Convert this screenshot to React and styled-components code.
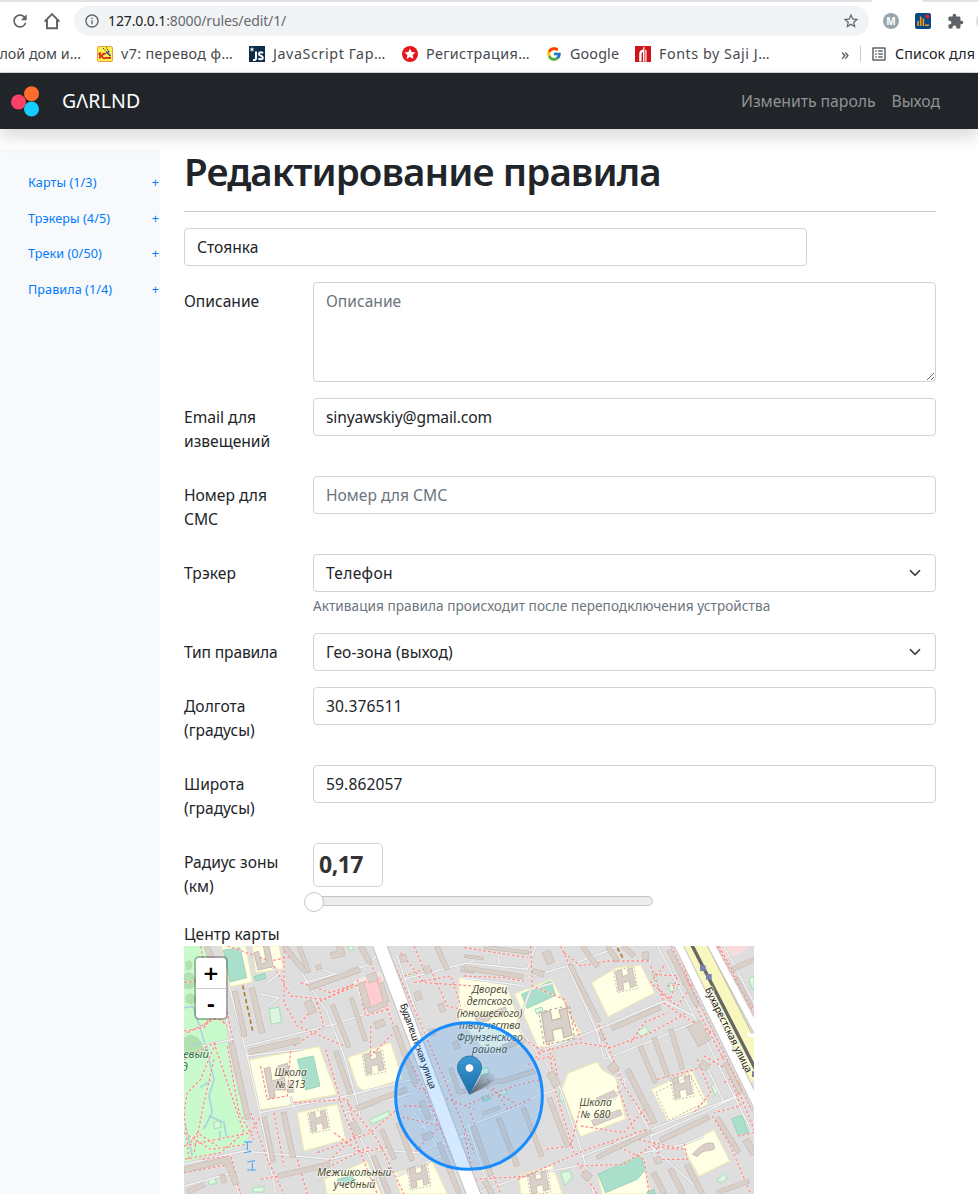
import React from "react";
import styled, { createGlobalStyle } from "styled-components";
import { MdRefresh, MdInfoOutline, MdStarBorder, MdExtension, MdOutlineListAlt } from "react-icons/md";
import { FcGoogle } from "react-icons/fc";

const Global = createGlobalStyle`
  *, *::before, *::after { box-sizing: border-box; }
  html, body { margin: 0; padding: 0; background: #fff; }
  body { overflow: hidden; }
  #root { font-family: "Noto Sans", "Open Sans", sans-serif; font-size: 16px; line-height: 1.5; color: #212529; }
`;

const Page = styled.div`
  width: 978px;
  height: 1194px;
  overflow: hidden;
  display: flex;
  flex-direction: column;
`;

/* ---------- browser chrome ---------- */
const TabStrip = styled.div`
  height: 2px;
  flex: none;
  display: flex;
  justify-content: space-between;
  span { background: #dee1e6; height: 2px; }
  span:first-child { width: 872px; border-bottom-right-radius: 2px; }
  span:last-child { width: 56px; border-bottom-left-radius: 2px; }
`;
const Toolbar = styled.div`
  height: 38px;
  flex: none;
  display: flex;
  align-items: center;
  padding-left: 10px;
  color: #5f6368;
  svg { flex: none; display: block; }
`;
const HomeIcon = styled.svg`
  margin: 0 13px 0 13px;
`;
const AddressBar = styled.div`
  width: 795px;
  height: 30px;
  border-radius: 15px;
  background: #f1f3f4;
  display: flex;
  align-items: center;
  padding: 0 9px 0 10px;
  flex: none;
`;
const Url = styled.div`
  flex: 1;
  margin-left: 8px;
  margin-top: -2px;
  font-size: 14px;
  letter-spacing: -0.13px;
  color: #666a6e;
  b { font-weight: 400; color: #202124; }
`;
const ProfileDot = styled.div`
  width: 16px;
  height: 16px;
  border-radius: 50%;
  background: #9aa6ae;
  color: #fff;
  font-size: 10px;
  font-weight: 700;
  line-height: 16px;
  text-align: center;
  margin: 0 16px 0 14px;
  flex: none;
`;
const Extensions = styled.div`
  display: flex;
  gap: 16px;
  align-items: center;
`;
const Avatar = styled.div`
  width: 24px;
  height: 24px;
  border-radius: 50%;
  background: #dee1e6;
  margin-left: 12px;
  flex: none;
`;
const Bookmarks = styled.div`
  height: 33px;
  flex: none;
  display: flex;
  align-items: center;
  padding-bottom: 5px;
  border-bottom: 1px solid #d5d7da;
  color: #45494d;
`;
const Bookmark = styled.div`
  width: ${(p) => p.$w}px;
  margin-right: 16px;
  display: flex;
  gap: 8px;
  flex: none;
  align-items: center;
  justify-content: ${(p) => (p.$end ? "flex-end" : "flex-start")};
  font-size: 14.3px;
  line-height: 20px;
  letter-spacing: ${(p) => p.$ls || 0}px;
  white-space: nowrap;
  svg { flex: none; display: block; }
`;
const More = styled.div`
  margin-left: auto;
  width: 19px;
  font-size: 16px;
  line-height: 20px;
`;
const ReadingList = styled.div`
  width: 118px;
  height: 16px;
  border-left: 1px solid #c8cbcf;
  padding-left: 9px;
  display: flex;
  align-items: center;
  gap: 7px;
  font-size: 14.3px;
  letter-spacing: 0.1px;
  white-space: nowrap;
  color: #202124;
  svg { flex: none; color: #5f6368; }
`;

/* ---------- site header ---------- */
const Navbar = styled.header`
  height: 56px;
  flex: none;
  background: #212529;
  box-shadow: 0 8px 16px rgba(0, 0, 0, 0.15);
  display: flex;
  align-items: center;
  padding: 0 38px 0 10px;
  position: relative;
`;
const Brand = styled.div`
  margin-left: 22px;
  font-size: 19.5px;
  color: #fff;
  letter-spacing: 0.15px;
`;
const NavLinks = styled.nav`
  margin-left: auto;
  display: flex;
  gap: 16px;
  color: #909294;
  font-size: 15.8px;
  line-height: 26px;
  letter-spacing: -0.06px;
`;

/* ---------- body ---------- */
const Main = styled.div`
  display: flex;
  flex: 1;
  padding-top: 20px;
  min-height: 0;
`;
const Sidebar = styled.aside`
  width: 160px;
  flex: none;
  background: #f8f9fa;
  padding: 16px 1px 0 28px;
`;
const SideItem = styled.div`
  display: flex;
  justify-content: space-between;
  height: 35.6px;
  line-height: 35.6px;
  font-size: 12.6px;
  color: #007bff;
  letter-spacing: 0.08px;
`;
const Content = styled.main`
  width: 752px;
  margin-left: 24px;
  flex: none;
`;
const Title = styled.h1`
  margin: 0;
  height: 62px;
  font-size: 38.5px;
  line-height: 45px;
  font-weight: 600;
  white-space: nowrap;
  letter-spacing: -0.9px;
`;
const Rule = styled.div`
  height: 1px;
  background: #c8c9ca;
  margin-bottom: 16px;
`;
const Row = styled.div`
  display: grid;
  grid-template-columns: ${(p) => (p.$bare ? "623px" : "129px 623px")};
  margin-bottom: 16px;
  align-items: start;
`;
const Label = styled.label`
  padding: 7px 20px 7px 0;
  font-size: 15.6px;
  line-height: 24px;
  white-space: pre-line;
  letter-spacing: ${(p) => p.$ls || 0}px;
`;
const controlBox = `
  display: block;
  width: 100%;
  border: 1px solid #ced4da;
  border-radius: 4px;
  background: #fff;
  color: #212529;
  font-family: inherit;
  font-size: 15.6px;
  line-height: 24px;
  padding: 6px 12px;
  outline: none;
  margin: 0;
  &::placeholder { color: #6c757d; opacity: 1; }
`;
const Input = styled.input`
  ${controlBox}
  height: 38px;
  letter-spacing: ${(p) => p.$ls || 0}px;
`;
const Area = styled.textarea`
  ${controlBox}
  height: 100px;
`;
const Select = styled.div`
  ${controlBox}
  height: 38px;
  display: flex;
  align-items: center;
  justify-content: space-between;
  letter-spacing: ${(p) => p.$ls || 0}px;
`;
const ChevronIcon = styled.svg`
  margin-right: 2px;
`;
const Hint = styled.div`
  margin-top: 3px;
  height: 22px;
  line-height: 21px;
  font-size: 13.6px;
  color: #6c757d;
  letter-spacing: 0.05px;
`;
const RadiusRow = styled(Row)`
  margin-bottom: 0;
  height: 79px;
`;
const RadiusBox = styled.div`
  width: 70px;
  height: 44px;
  border: 1px solid #ced4da;
  border-radius: 5px;
  padding-left: 5px;
  font-size: 23px;
  font-weight: 700;
  line-height: 41px;
  color: #333;
  letter-spacing: -0.5px;
`;
const Track = styled.div`
  width: 340px;
  height: 10px;
  margin-top: 9px;
  border: 1px solid #c5c5c5;
  border-radius: 5px;
  background: #ededed;
  position: relative;
`;
const Thumb = styled.span`
  position: absolute;
  left: -10px;
  top: -5px;
  width: 20px;
  height: 20px;
  border-radius: 50%;
  border: 1px solid #c5c5c5;
  background: #fff;
`;
const MapCaption = styled.div`
  height: 24px;
  line-height: 24px;
  font-size: 15.6px;
`;
const MapFrame = styled.div`
  width: 570px;
  height: 248px;
  position: relative;
  overflow: hidden;
  svg { display: block; }
`;
const ZoomControl = styled.div`
  position: absolute;
  left: 10px;
  top: 10px;
  width: 34px;
  border: 2px solid rgba(0, 0, 0, 0.25);
  border-radius: 5px;
  background-clip: padding-box;
  background-color: #fff;
`;
const ZoomButton = styled.div`
  height: 30px;
  text-align: center;
  font: bold 20px/30px "DejaVu Sans", sans-serif;
  color: #000;
  & + & { border-top: 1px solid #ccc; }
`;

/* ---------- map data: units are thirds of a pixel ---------- */
const buildings = [
  [300,0,365,80,16],[375,125,528,70,18],[152,135,182,272,17],[203,125,235,262,18],[195,318,350,282,19],
  [142,290,192,520,18],[445,175,495,305,14],[502,155,545,285,14],[455,315,500,445,16],[632,240,695,415,17],
  [517,487,668,430,17],[240,512,268,648,15],[298,498,328,635,17],[283,690,438,655,17],[0,672,130,640,18],
  [128,640,157,715,20],[592,550,632,640,15],[642,530,685,645,15],[370,165,388,202,24],[505,528,525,565,22],
  [765,590,826,744,16],[568,630,615,744,16],[530,0,558,50,18],[758,0,790,72,16],[68,0,90,60,18],
  [10,738,62,715,16],[115,685,120,712,16],[345,0,375,80,14],[320,410,320,440,18],[395,65,412,62,15],
  [830,68,870,74,18],[530,110,552,185,20],[552,195,610,170,18],[590,110,608,170,18],[550,100,580,90,26],
  [440,30,480,20,20],[465,0,475,25,20],[572,240,602,228,22],[712,465,735,520,18],[715,575,745,565,22],
  [800,365,825,440,14],[822,440,870,428,13],[648,40,668,34,22],[720,75,740,68,24],[692,152,712,146,28],[765,188,782,182,26],
  [735,262,755,256,22],[808,300,826,294,24],
];
const buildingsB = [
  [0,66,178,92,15],[60,3,195,20,12],[0,30,60,38,10],[245,15,262,52,26],[205,75,240,86,18],[318,55,405,228,15],
  [355,0,400,62,15],[430,0,460,45,15],[478,0,510,30,15],[615,12,700,180,15],[443,248,590,183,16],
  [528,300,575,410,15],[570,275,612,392,15],[620,250,656,370,15],[490,370,572,532,18],[255,455,312,602,16],
  [178,485,234,632,15],[103,515,160,660,16],[28,540,82,690,16],[108,408,212,375,15],[20,435,110,402,15],
  [398,635,562,555,14],[588,584,735,513,17],[760,515,825,620,15],[688,232,722,292,44],[783,350,830,440,16],
  [568,680,602,744,17],[618,668,658,744,17],[668,655,715,744,17],[258,378,280,420,25],[438,355,458,375,28],
  [62,705,85,744,18],[358,680,378,698,25],[570,645,592,640,22],[805,70,870,40,16],[815,98,860,185,17],
  [845,580,872,625,22],[760,740,855,705,15],[385,532,472,498,20],[400,465,455,440,20],[708,352,732,366,25],
  [60,215,128,190,18],[35,222,75,208,30],[115,305,185,280,17],[55,503,108,485,12],[408,258,418,285,12],
  [535,30,555,28,24],
];
const campuses = [
  "188,343 405,302 458,445 335,468 310,480 222,492",
  "492,335 620,290 655,400 540,435 520,420",
  "340,500 460,475 485,580 360,615",
  "112,0 185,0 205,108 138,122",
  "205,0 285,0 298,68 215,80",
  "630,682 745,648 790,744 650,744",
  "420,700 548,645 592,744 430,744",
  "825,95 965,112 1000,215 1020,300 900,310 825,220",
];
const campusesB = [
  "152,144 262,100 350,262 265,302 222,302",
  "383,110 458,65 530,58 572,140 432,212",
  "294,430 312,382 398,348 415,372 455,395 485,518 350,572",
  "562,430 685,375 732,475 615,532",
  "655,600 750,552 797,645 705,690",
  "165,688 265,658 295,744 170,744",
  "400,688 530,625 562,744 415,744",
];
const pitches = [
  "118,12 168,5 188,95 138,108","340,340 388,330 408,420 365,432","460,700 505,688 512,706 465,716","210,92 243,82 246,98 216,104",
];
const pitchesB = [
  "172,145 260,105 275,148 190,187","402,685 528,628 545,670 520,700 425,740","803,518 835,508 852,560 825,572",
  "50,455 76,446 80,460 56,466","548,738 570,730 574,744 552,744",
];
const lawns = [
  "256,188 285,184 293,228 262,235","556,522 612,495 618,510 565,534","675,86 688,84 690,96 678,98",
  "72,700 92,695 98,712 76,716","205,725 240,722 240,738 208,738","490,0 505,0 510,12 498,14","88,530 106,524 112,544 92,548",
];
const lawnsB = [
  "285,440 295,438 302,462 290,468","742,420 752,408 764,435 752,448","290,680 318,674 324,695 302,718",
  "520,256 545,240 555,258 530,274","213,190 233,183 238,196 218,204","40,372 70,364 76,382 50,388",
  "100,438 125,430 130,443 105,450","758,705 780,682 790,698 772,710","612,115 640,110 638,130 618,138","565,80 575,78 580,100 570,105","854,98 870,90 870,130 864,128",
];
const lanes = [
  "135,120 190,330 240,560 275,744","0,655 180,615 440,640 560,610 700,620 860,560","185,300 450,235 600,185",
  "225,500 485,450 690,400","310,0 370,110 430,200 480,330 520,470 530,520","360,110 545,60 590,20",
  "495,505 560,640 600,744","640,30 700,210 730,270","660,100 870,45","415,70 465,90 530,60","185,330 355,310",
  "0,720 145,680 165,744","640,690 745,640 870,590","725,430 870,375","480,500 690,440","250,110 290,80 205,20",
  "120,200 145,280 60,300","230,145 285,155 250,180","690,500 760,600 870,560","700,490 755,500 750,530 710,545","320,450 330,490",
];
const lanesB = [
  "0,50 190,70 215,0","180,120 0,95","100,0 105,55","190,95 310,60 470,0","310,60 400,260 450,360 560,560 575,640",
  "220,320 400,250 600,165 690,210","400,260 420,340 560,285 690,230 750,270","240,440 140,490 0,545",
  "235,330 290,430 345,590 390,744","345,635 560,550 820,450","580,0 690,210 830,490 870,570","560,570 720,500 820,450",
  "235,400 215,370 70,420","340,660 180,690 30,744","540,620 660,595 720,570","560,600 720,744","10,530 80,744",
  "280,430 235,445","720,345 780,470","780,0 870,170","455,395 485,400 450,460","270,110 200,130 160,240 220,320",
];
const walks = [
  "270,60 320,150 420,160 560,100","300,0 300,170 340,240 480,300","10,260 130,200 150,300","0,340 90,290 180,560 110,620 0,640",
  "130,300 165,500 210,580","60,240 100,180 70,120","0,110 70,100 120,230","350,110 440,140 510,115 400,170 350,230",
  "330,300 420,240 400,170","425,310 480,500 580,744","200,500 250,640 300,744","330,470 490,460 520,560 420,660",
  "400,620 560,560 650,480","0,680 140,655 170,744","270,500 300,660","340,640 370,744","230,700 440,660 560,600",
  "560,50 640,270 720,430 850,744","620,30 700,210 790,420 870,620","560,240 560,330 640,250","650,20 720,110 870,120",
  "740,70 790,180 870,200","690,110 800,90 830,180","130,0 260,45 330,30","520,100 545,210 610,190","690,420 870,490",
  "660,480 750,480 780,560","490,470 580,580 660,744","230,360 250,460 310,450 320,310","0,600 200,560 230,510","640,510 770,540 690,620",
  "0,560 80,610 190,595","15,640 0,500","55,640 140,630 160,700","450,560 530,620 620,600","690,0 720,70 660,90",
  "0,255 60,245 90,205 130,240","95,290 50,400 10,440 0,500","90,340 60,470 30,620","20,590 40,560 100,600","50,0 60,60 110,180",
];
const walksB = [
  "0,5 190,35","0,90 120,95 180,105","200,0 205,120 300,160 355,290","290,0 350,130 420,270 480,420 560,540",
  "300,20 350,60 430,45 560,45","220,320 350,290 440,305 560,260 670,200","560,60 600,170 640,200 760,270",
  "350,480 320,600 240,610","350,540 480,560 550,480","640,0 700,190 810,400 870,550","350,660 480,655 560,600 640,610",
  "600,60 560,110 620,160 640,90 570,85","610,120 690,110 640,180 590,140","500,290 540,230 610,200",
  "700,340 740,440 690,500","720,330 790,370 830,480 750,500","580,400 730,360 780,330","150,470 60,420 0,440","0,480 150,420 230,400",
  "70,400 130,490 200,460","0,560 30,700 200,690","220,340 270,330 280,390","160,700 370,610 550,550","340,650 400,744","570,590 590,640 670,640 660,590",
  "700,0 870,330","765,0 870,190","180,280 235,315 190,360","555,740 540,640 440,590","745,510 800,600 860,744","820,570 870,560","20,500 60,620 110,744",
  "255,290 270,420 330,620","780,410 830,380 820,450","460,420 520,580 660,610",
];
const H = "M-34,-28 L-14,-34 L-10,-12 L10,-18 L5,-36 L22,-40 L34,20 L16,26 L12,4 L-10,10 L-6,32 L-24,36 Z";

const Layer = ({ polys, lawn, pitch, lane, walk, blds, hs }) => (
  <g>
    {polys.map((p) => <polygon key={p} points={p} fill="#ffffe5" stroke="#f3eab0" strokeWidth="3" />)}
    {lawn.map((p) => <polygon key={p} points={p} fill="#def6e0" stroke="#9fe0b4" strokeWidth="3" />)}
    {pitch.map((p) => <polygon key={p} points={p} fill="#aae0cb" stroke="#7fc9ae" strokeWidth="2" />)}
    <g fill="none" strokeLinejoin="round">
      {lane.map((p) => <polyline key={p} points={p} stroke="#c9c8c8" strokeWidth="8" />)}
      {lane.map((p) => <polyline key={p} points={p} stroke="#f4f4f4" strokeWidth="4.5" />)}
      {walk.map((p) => <polyline key={p} points={p} stroke="#fff" strokeOpacity=".4" strokeWidth="6" />)}
      {walk.map((p) => <polyline key={p} points={p} stroke="#fa8f88" strokeWidth="3.8" strokeDasharray="9 5.5" />)}
    </g>
    {blds.map((b) => <line key={b.join()} x1={b[0]} y1={b[1]} x2={b[2]} y2={b[3]} stroke="#c2b4aa" strokeWidth={b[4]} />)}
    {blds.map((b) => {
      const l = Math.hypot(b[2] - b[0], b[3] - b[1]);
      const dx = ((b[2] - b[0]) / l) * 1.5, dy = ((b[3] - b[1]) / l) * 1.5;
      return <line key={b.join()} x1={b[0] + dx} y1={b[1] + dy} x2={b[2] - dx} y2={b[3] - dy} stroke="#d9d0c9" strokeWidth={b[4] - 3} />;
    })}
    {hs.map(([x, y, s]) => (
      <g key={x + "-" + y} transform={`translate(${x} ${y}) scale(${s})`}>
        <path d="M-40,-30 L28,-46 L40,28 L-28,42 Z" fill="none" stroke="#aaa49d" strokeWidth="2.5" strokeDasharray="6 6" />
        <path d={H} fill="#d9d0c9" stroke="#c2b4aa" strokeWidth="2.5" />
      </g>
    ))}
  </g>
);

const PlaceLabel = ({ x, y, lines, fill = "#4d4d2e", size = 31, step = 36 }) => (
  <text textAnchor="middle" fontFamily="Noto Sans, sans-serif" fontStyle="italic" fontSize={size} fill={fill}
    stroke="#fff" strokeOpacity=".65" strokeWidth="5" strokeLinejoin="round" paintOrder="stroke">
    {lines.map((l, i) => <tspan key={l} x={x} y={y + i * step}>{l}</tspan>)}
  </text>
);

const StreetMap = () => (
  <svg width="570" height="248" viewBox="0 0 1710 744">
    <defs>
      <linearGradient id="pin" x1="0" y1="0" x2="0" y2="1">
        <stop offset="0" stopColor="#3a9bd6" /><stop offset="1" stopColor="#1c6ba6" />
      </linearGradient>
      <linearGradient id="shade" x1="0" y1="1" x2="1" y2="0">
        <stop offset="0" stopColor="#222" stopOpacity=".65" /><stop offset="1" stopColor="#222" stopOpacity="0" />
      </linearGradient>
      <path id="budapest" d="M648,176 L742,440" />
      <path id="bucharest" d="M1562,130 L1696,400" />
    </defs>
    <rect width="1710" height="744" fill="#dfdede" />
    <polygon points="0,0 65,0 100,120 125,230 135,330 195,560 190,595 0,650" fill="#c8facc" />
    <path fill="#a9d8a5" opacity=".75" d="M0,85 l14,-8 12,6 10,16 -4,22 -14,10 -18,-4z M4,150 l14,-10 18,10 2,18 -16,8 -18,-8z M0,275 l18,-10 22,8 16,20 -8,22 6,20 -22,4 -16,-8 -16,2z M50,300 l14,4 4,18 -10,10 -12,-8z M4,48 l12,-6 10,10 -4,18 -16,4z" />
    <g fill="none" stroke="#aad3df" strokeWidth="5">
      <path d="M0,185 L28,182 L65,300 L90,400 L75,450 L85,500 L58,550" />
      <path d="M48,425 L80,405" /><path d="M75,510 L120,530 L128,575" /><path d="M20,300 L50,290" /><path d="M5,540 L25,630" /><path d="M108,555 V585" />
    </g>
    <polygon points="508,105 590,75 620,190 555,210" fill="#f3e8e4" />
    <polygon points="525,110 590,90 618,190 550,205" fill="#ffcccf" />
    <polygon points="568,0 590,0 615,75 600,90" fill="#c5ebb5" />
    <polygon points="1600,0 1700,0 1670,20 1620,40" fill="#fbdcdc" />
    <Layer polys={campuses} lawn={lawns} pitch={pitches} lane={lanes} walk={walks} blds={buildings}
      hs={[[570, 352, 0.9], [404, 527, 0.85], [705, 694, 0.9]]} />
    <g fill="#d9d0c9" stroke="#c2b4aa" strokeWidth="2.5">
      <path d="M240,368 L258,363 L264,405 L292,398 L282,360 L310,352 L318,382 L300,390 L306,432 L270,432 L274,452 L258,458 Z" />
      <path d="M210,20 L222,72 L268,62 L255,0 L238,0 L248,50 L232,54 L224,16 Z" />
    </g>
    <g transform="translate(840 0)">
      <Layer polys={campusesB} lawn={lawnsB} pitch={pitchesB} lane={lanesB} walk={walksB} blds={buildingsB}
        hs={[[485, 102, 0.9], [278, 240, 1.35], [655, 425, 0.9], [225, 712, 0.9]]} />
      <path d="M685,625 L700,610 Q725,585 748,592 L752,608 L735,614 Q715,612 700,632 Z" fill="#d9d0c9" stroke="#c2b4aa" strokeWidth="2.5" />
      <polygon points="575,440 680,388 722,470 615,522" fill="none" stroke="#aaa49d" strokeWidth="2.5" strokeDasharray="6 6" />
    </g>

    <g fill="none">
      <path d="M176,118 L206,255" stroke="#b07d28" strokeWidth="5" strokeDasharray="13 8" />
      <path d="M1300,5 L1316,35" stroke="#b07d28" strokeWidth="5" strokeDasharray="13 8" />
      <path d="M180,588 H205 M190,588 V612 M180,620 L202,616 M190,648 L213,644 M205,650 V672 M190,672 H215" stroke="#3ba0f5" strokeWidth="3" />
      <path d="M580,-20 L880,775" stroke="#c4c3c3" strokeWidth="44" />
      <path d="M580,-20 L880,775" stroke="#fff" strokeWidth="38" />
      <path d="M1525,-10 L1730,395" stroke="#b3b388" strokeWidth="74" />
      <path d="M1525,-10 L1730,395" stroke="#f7f7bf" strokeWidth="70" />
      <path d="M1480,-10 L1730,500" stroke="#c7c6c6" strokeWidth="28" />
      <path d="M1480,-10 L1730,500" stroke="#fff" strokeWidth="22" />
      <path d="M1578,-10 L1730,275" stroke="#c7c6c6" strokeWidth="26" />
      <path d="M1578,-10 L1730,275" stroke="#fff" strokeWidth="20" />
      <path d="M1520,-10 L1725,390" stroke="#666" strokeWidth="10" />
      <path d="M1690,265 L1720,272" stroke="#fff" strokeWidth="12" />
      <path d="M1462,0 L1705,495 M1600,0 L1715,210" stroke="#fa8f88" strokeWidth="3.2" strokeDasharray="8 6" />
    </g>
    <g fill="#7981b0"><rect x="1548" y="58" width="17" height="17" /><rect x="1566" y="84" width="17" height="17" /><rect x="1704" y="376" width="17" height="17" /></g>

    <g fontFamily="Noto Sans, sans-serif" fontSize="29" fill="#111" stroke="#fff" strokeOpacity=".7" strokeWidth="5" paintOrder="stroke">
      <text textLength="270"><textPath href="#budapest">Будапештская улица</textPath></text>
      <text fontSize="30" textLength="282" lengthAdjust="spacingAndGlyphs"><textPath href="#bucharest">Бухарестская улица</textPath></text>
    </g>
    <PlaceLabel x={320} y={390} lines={["Школа", "№ 213"]} />
    <PlaceLabel x={1235} y={479} lines={["Школа", "№ 680"]} />
    <PlaceLabel x={511} y={690} size={31.5} lines={["Межшкольный", "учебный"]} />
    <PlaceLabel x={917} y={140} lines={["Дворец", "детского", "(юношеского)", "творчества", "Фрунзенского", "района"]} />
    <PlaceLabel x={36} y={337} size={34} fill="#2f7040" lines={["евый"]} />
    <PlaceLabel x={2} y={375} size={34} fill="#2f7040" lines={["д"]} />

    <circle cx="855" cy="450" r="220" fill="#1e90ff" fillOpacity=".2" stroke="#188cff" strokeWidth="9" />
    <path d="M857,446 L892,388 Q915,372 932,385 Q938,400 912,418 Z" fill="url(#shade)" />
    <g transform="translate(819 329) scale(3 2.9)">
      <path d="M12.5,.5 C5.8,.5 .5,5.9 .5,12.5 C.5,15 1.6,17.6 2.6,19.6 L12.5,40 L22.4,19.6 C23.4,17.6 24.5,15 24.5,12.5 C24.5,5.9 19.2,.5 12.5,.5 Z" fill="url(#pin)" stroke="#2a6f9f" strokeWidth="1" />
      <circle cx="12.5" cy="12.8" r="4.4" fill="#fff" stroke="#2470a5" strokeWidth=".8" />
    </g>
  </svg>
);

const Chevron = () => (
  <ChevronIcon width="12" height="12" viewBox="0 0 16 16">
    <path fill="none" stroke="#343a40" strokeLinecap="round" strokeLinejoin="round" strokeWidth="2.3" d="M2 5l6 6 6-6" />
  </ChevronIcon>
);

const sideItems = ["Карты (1/3)", "Трэкеры (4/5)", "Треки (0/50)", "Правила (1/4)"];

export default function App() {
  return (
    <Page>
      <Global />
      <TabStrip><span /><span /></TabStrip>
      <Toolbar>
        <MdRefresh size={20} />
        <HomeIcon width="18" height="18" viewBox="0 0 18 18">
          <path d="M1.6 9.6 9 2.2l7.4 7.4M4 8v8.2h10V8" fill="none" stroke="#5f6368" strokeWidth="1.9" />
        </HomeIcon>
        <AddressBar>
          <MdInfoOutline size={16} />
          <Url><b>127.0.0.1</b>:8000/rules/edit/1/</Url>
          <MdStarBorder size={18} />
        </AddressBar>
        <ProfileDot>M</ProfileDot>
        <Extensions>
          <svg width="16" height="16" viewBox="0 0 16 16">
            <rect width="16" height="16" rx="2" fill="#0b4a80" />
            <path d="M3 13V8M5.7 13V3.5M8.4 13V5.5M10 12.3H14" stroke="#f29a1f" strokeWidth="1.6" />
            <circle cx="12.5" cy="3.3" r="1.9" fill="#f51d20" />
          </svg>
          <MdExtension size={17} />
        </Extensions>
        <Avatar />
      </Toolbar>
      <Bookmarks>
        <Bookmark $w={81} $end>лой дом и…</Bookmark>
        <Bookmark $w={136} $ls={0.38}>
          <svg width="16" height="16" viewBox="0 0 16 16">
            <rect x=".5" y=".5" width="15" height="15" rx="1.5" fill="#fff04a" stroke="#e6a23c" />
            <path d="M1.5 8.3 3 7.3V12.6M8.8 8.2A2.3 2.3 0 1 0 8.5 11.9H14" fill="none" stroke="#d8201c" strokeWidth="1.7" />
            <path d="M9 5.5 13.5 10M11 4.8 12.3 6.2" stroke="#1b2cc0" strokeWidth="1.3" />
            <path d="M6 2.5h1M9 1.8h1M7.5 4h1M10 3.3h1" stroke="#333" />
          </svg>
          v7: перевод ф…
        </Bookmark>
        <Bookmark $w={137} $ls={0.6}>
          <svg width="16" height="16" viewBox="0 0 16 16">
            <rect width="16" height="16" fill="#0c2c4a" />
            <path d="M7 5.5v6.8q0 2.2-3 1.7M14.2 6.9Q10 5.4 10 7.9q0 1.2 1.9 1.8 2 .7 1.9 2.1-.3 2.3-4.4 1" fill="none" stroke="#fff" strokeWidth="2" />
            <path d="M3 1.6v3.8M1.4 2.6l3.2 1.8M4.6 2.6 1.4 4.4" stroke="#fff" />
          </svg>
          JavaScript Гар…
        </Bookmark>
        <Bookmark $w={128} $ls={0.4}>
          <svg width="16" height="16" viewBox="0 0 16 16">
            <circle cx="8" cy="8" r="8" fill="#e3181f" />
            <path d="M8 2.6l1.6 3.5 3.9.4-2.9 2.6.8 3.8L8 11l-3.4 1.9.8-3.8-2.9-2.6 3.9-.4z" fill="#fff" />
          </svg>
          Регистрация…
        </Bookmark>
        <Bookmark $w={73} $ls={0.15}><FcGoogle size={16} />Google</Bookmark>
        <Bookmark $w={136} $ls={0.55}>
          <svg width="16" height="16" viewBox="0 0 16 16">
            <rect width="16" height="16" fill="#cf1519" />
            <path d="M4.2 15.5V8q0-4 4-4.6V1.2l1.2-.4v15H8V6Q6.6 6.4 6.6 8.5v7z" fill="#fff" />
            <path d="M10.3 3.5l1.2.8v11.5h-1.2z" fill="#fff" />
          </svg>
          Fonts by Saji J…
        </Bookmark>
        <More>»</More>
        <ReadingList><MdOutlineListAlt size={18} />Список для</ReadingList>
      </Bookmarks>

      <Navbar>
        <svg width="30" height="32" viewBox="0 0 30 32">
          <circle cx="8.5" cy="17" r="7.5" fill="#ff4069" />
          <circle cx="21.5" cy="8.8" r="7.5" fill="#ff6c2c" />
          <circle cx="21.5" cy="24" r="7.5" fill="#16ccff" />
        </svg>
        <Brand>GΛRLND</Brand>
        <NavLinks><span>Изменить пароль</span><span>Выход</span></NavLinks>
      </Navbar>

      <Main>
        <Sidebar>
          {sideItems.map((t) => <SideItem key={t}><span>{t}</span><span>+</span></SideItem>)}
        </Sidebar>
        <Content>
          <Title>Редактирование правила</Title>
          <Rule />
          <Row $bare><Input defaultValue="Стоянка" /></Row>
          <Row><Label>Описание</Label><Area placeholder="Описание" /></Row>
          <Row><Label>{"Email для\nизвещений"}</Label><Input $ls={-0.13} defaultValue="sinyawskiy@gmail.com" /></Row>
          <Row><Label>{"Номер для\nСМС"}</Label><Input placeholder="Номер для СМС" /></Row>
          <Row>
            <Label $ls={0.1}>Трэкер</Label>
            <div>
              <Select $ls={0.3}>Телефон<Chevron /></Select>
              <Hint>Активация правила происходит после переподключения устройства</Hint>
            </div>
          </Row>
          <Row><Label $ls={-0.15}>Тип правила</Label><Select $ls={0.08}>Гео-зона (выход)<Chevron /></Select></Row>
          <Row><Label>{"Долгота\n(градусы)"}</Label><Input $ls={0.12} defaultValue="30.376511" /></Row>
          <Row><Label>{"Широта\n(градусы)"}</Label><Input $ls={0.12} defaultValue="59.862057" /></Row>
          <RadiusRow>
            <Label>{"Радиус зоны\n(км)"}</Label>
            <div>
              <RadiusBox>0,17</RadiusBox>
              <Track><Thumb /></Track>
            </div>
          </RadiusRow>
          <MapCaption>Центр карты</MapCaption>
          <MapFrame>
            <StreetMap />
            <ZoomControl><ZoomButton>+</ZoomButton><ZoomButton>-</ZoomButton></ZoomControl>
          </MapFrame>
        </Content>
      </Main>
    </Page>
  );
}
